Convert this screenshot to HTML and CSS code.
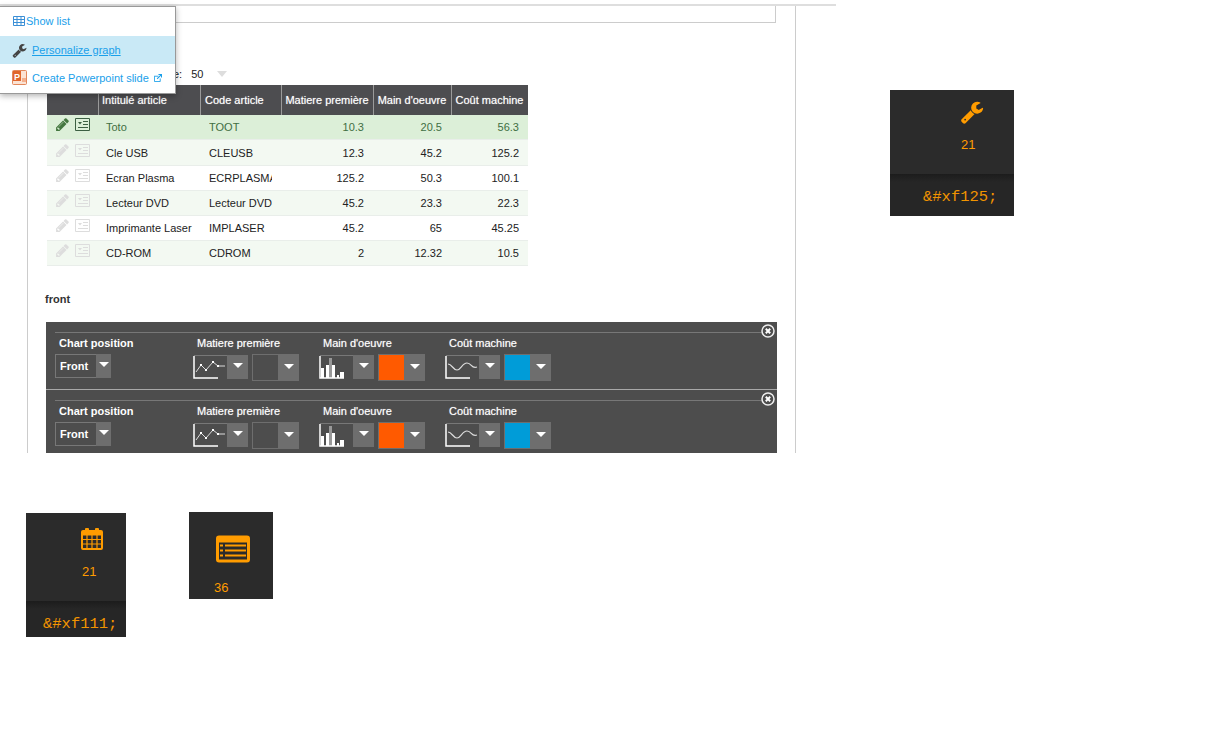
FILE: index.html
```html
<!DOCTYPE html>
<html lang="en">
<head>
    <meta charset="UTF-8">
    <title>Personalize graph</title>
    <link rel="stylesheet" href="styles.css">
</head>
<body>
    <svg class="defs" width="0" height="0">
        <symbol id="wrench" viewBox="0 0 1792 1792"><path d="M448 1472q0-26-19-45t-45-19-45 19-19 45 19 45 45 19 45-19 19-45zm644-420l-682 682q-37 37-90 37-52 0-91-37l-106-108q-38-36-38-90 0-53 38-91l681-681q39 98 114.5 173.5t173.5 114.5zm634-435q0 39-23 106-47 134-164.5 217.5t-258.5 83.5q-185 0-316.5-131.5t-131.5-316.5 131.5-316.5 316.5-131.5q58 0 121.5 16.5t107.5 46.5q16 11 16 28t-16 28l-293 169v224l193 107q5-3 79-48.5t135.5-81 70.5-35.5q15 0 23.5 10t8.5 25z"/></symbol>
        <symbol id="pencil" viewBox="0 0 1792 1792"><path d="M491 1536l91-91-235-235-91 91v107h128v128h107zm523-928q0-22-22-22-10 0-17 7l-542 542q-7 7-7 17 0 22 22 22 10 0 17-7l542-542q7-7 7-17zm-54-192l416 416-832 832h-416v-416zm683 96q0 53-37 90l-166 166-416-416 166-165q36-38 90-38 53 0 91 38l235 234q37 39 37 91z"/></symbol>
        <symbol id="card" viewBox="0 0 15 13"><path d="M.5.5h14v12H.5z" fill="none" stroke="currentColor"/><path d="M3 4h4L5 6.500zM8 3h5v1H8zM8 6h5v1H8zM3 9h10v1H3z" fill="currentColor"/></symbol>
        <symbol id="axis-line" viewBox="0 0 34 24"><path d="M1 .5h33" stroke="#777"/><path d="M1 1v22h24" fill="none" stroke="#fff" stroke-width="1.500"/><path d="M3 17l5-7 5 5 7-8 5 4h7" fill="none" stroke="#ddd"/><path d="M7 9h2v2H7zM12 14h2v2h-2zM19 6h2v2h-2zM24 10h2v2h-2z" fill="#fff"/></symbol>
        <symbol id="axis-bars" viewBox="0 0 34 24"><path d="M1 .5h33" stroke="#777"/><path d="M10 3h3v20h-3z" fill="#999"/><path d="M1 1v22h24" fill="none" stroke="#fff" stroke-width="1.500"/><path d="M2 13h3v10H2zM7 10h3v13H7zM13 10h3v13h-3zM18 20h2v3h-2zM21 17h4v6h-4z" fill="#fff"/></symbol>
        <symbol id="axis-wave" viewBox="0 0 34 24"><path d="M1 .5h33" stroke="#777"/><path d="M1 1v22h24" fill="none" stroke="#fff" stroke-width="1.500"/><path d="M3 9c4 0 5 6 9 6s5-7 10-7 4 6 10 4" fill="none" stroke="#ddd" stroke-width="1.200"/></symbol>
        <symbol id="close" viewBox="0 0 14 14"><circle cx="7" cy="7" r="6" fill="#4d4d4d" stroke="#eee" stroke-width="1.500"/><path d="M4.800 4.800l4.400 4.400M9.200 4.800l-4.400 4.400" stroke="#fff" stroke-width="2"/></symbol>
    </svg>

    <div id="topRow">
        <div id="mainArea">
            <div id="frame">
                <div id="titleBox"></div>
                <div id="pageSize"><span>e:</span><span class="sizeValue">50</span><span class="sizeArrow"></span></div>
                <table id="articles">
                    <thead>
                        <tr><th class="tools"></th><th>Intitulé article</th><th>Code article</th><th class="num">Matiere première</th><th class="num">Main d'oeuvre</th><th class="num">Coût machine</th></tr>
                    </thead>
                    <tbody>
                        <tr class="selected">
                            <td class="tools"><svg class="pen"><use href="#pencil"/></svg><svg class="cardIcon"><use href="#card"/></svg></td>
                            <td>Toto</td><td><div class="clip">TOOT</div></td><td class="num">10.3</td><td class="num">20.5</td><td class="num">56.3</td>
                        </tr>
                        <tr class="tint">
                            <td class="tools"><svg class="pen"><use href="#pencil"/></svg><svg class="cardIcon"><use href="#card"/></svg></td>
                            <td>Cle USB</td><td><div class="clip">CLEUSB</div></td><td class="num">12.3</td><td class="num">45.2</td><td class="num">125.2</td>
                        </tr>
                        <tr>
                            <td class="tools"><svg class="pen"><use href="#pencil"/></svg><svg class="cardIcon"><use href="#card"/></svg></td>
                            <td>Ecran Plasma</td><td><div class="clip">ECRPLASMA</div></td><td class="num">125.2</td><td class="num">50.3</td><td class="num">100.1</td>
                        </tr>
                        <tr class="tint">
                            <td class="tools"><svg class="pen"><use href="#pencil"/></svg><svg class="cardIcon"><use href="#card"/></svg></td>
                            <td>Lecteur DVD</td><td><div class="clip">Lecteur DVD</div></td><td class="num">45.2</td><td class="num">23.3</td><td class="num">22.3</td>
                        </tr>
                        <tr>
                            <td class="tools"><svg class="pen"><use href="#pencil"/></svg><svg class="cardIcon"><use href="#card"/></svg></td>
                            <td>Imprimante Laser</td><td><div class="clip">IMPLASER</div></td><td class="num">45.2</td><td class="num">65</td><td class="num">45.25</td>
                        </tr>
                        <tr class="tint">
                            <td class="tools"><svg class="pen"><use href="#pencil"/></svg><svg class="cardIcon"><use href="#card"/></svg></td>
                            <td>CD-ROM</td><td><div class="clip">CDROM</div></td><td class="num">2</td><td class="num">12.32</td><td class="num">10.5</td>
                        </tr>
                    </tbody>
                </table>
                <div id="frontLabel">front</div>
                <div id="chartPanel">
                    <div class="chartRow">
                        <div class="rule"></div>
                        <svg class="closeIcon"><use href="#close"/></svg>
                        <div class="groups">
                            <div class="group groupFirst">
                                <div class="groupLabel groupLabelBold">Chart position</div>
                                <div class="positionSelect"><span class="positionText">Front</span><span class="arrowBox arrowUp"><i></i></span></div>
                            </div>
                            <div class="group">
                                <div class="groupLabel">Matiere première</div>
                                <div class="controls">
                                    <div class="typeSelect"><svg class="axis"><use href="#axis-line"/></svg><span class="arrowBox"><i></i></span></div>
                                    <div class="colorSelect"><span class="swatch"></span><span class="arrowBox"><i></i></span></div>
                                </div>
                            </div>
                            <div class="group">
                                <div class="groupLabel">Main d'oeuvre</div>
                                <div class="controls">
                                    <div class="typeSelect"><svg class="axis"><use href="#axis-bars"/></svg><span class="arrowBox"><i></i></span></div>
                                    <div class="colorSelect"><span class="swatch orange"></span><span class="arrowBox"><i></i></span></div>
                                </div>
                            </div>
                            <div class="group">
                                <div class="groupLabel">Coût machine</div>
                                <div class="controls">
                                    <div class="typeSelect"><svg class="axis"><use href="#axis-wave"/></svg><span class="arrowBox"><i></i></span></div>
                                    <div class="colorSelect"><span class="swatch blue"></span><span class="arrowBox"><i></i></span></div>
                                </div>
                            </div>
                        </div>
                    </div>
                    <div class="chartRow">
                        <div class="rule"></div>
                        <svg class="closeIcon"><use href="#close"/></svg>
                        <div class="groups">
                            <div class="group groupFirst">
                                <div class="groupLabel groupLabelBold">Chart position</div>
                                <div class="positionSelect"><span class="positionText">Front</span><span class="arrowBox arrowUp"><i></i></span></div>
                            </div>
                            <div class="group">
                                <div class="groupLabel">Matiere première</div>
                                <div class="controls">
                                    <div class="typeSelect"><svg class="axis"><use href="#axis-line"/></svg><span class="arrowBox"><i></i></span></div>
                                    <div class="colorSelect"><span class="swatch"></span><span class="arrowBox"><i></i></span></div>
                                </div>
                            </div>
                            <div class="group">
                                <div class="groupLabel">Main d'oeuvre</div>
                                <div class="controls">
                                    <div class="typeSelect"><svg class="axis"><use href="#axis-bars"/></svg><span class="arrowBox"><i></i></span></div>
                                    <div class="colorSelect"><span class="swatch orange"></span><span class="arrowBox"><i></i></span></div>
                                </div>
                            </div>
                            <div class="group">
                                <div class="groupLabel">Coût machine</div>
                                <div class="controls">
                                    <div class="typeSelect"><svg class="axis"><use href="#axis-wave"/></svg><span class="arrowBox"><i></i></span></div>
                                    <div class="colorSelect"><span class="swatch blue"></span><span class="arrowBox"><i></i></span></div>
                                </div>
                            </div>
                        </div>
                    </div>
                </div>
            </div>

            <div id="menu">
                <a class="menuItem">
                    <svg class="menuTable" viewBox="0 0 12 10"><path d="M.5.500h11v9H.5zM.5 3.500h11M.5 6.500h11M4 .5v9M8 .5v9" fill="none" stroke="#3b8fd6"/></svg>
                    <span>Show list</span>
                </a>
                <a class="menuItem itemHover">
                    <svg class="menuWrench"><use href="#wrench"/></svg>
                    <span class="underlined">Personalize graph</span>
                </a>
                <a class="menuItem">
                    <svg class="menuPpt" viewBox="0 0 15 15"><rect x=".5" y=".5" width="14" height="14" rx="1" fill="#fbe3d4" stroke="#e2875a"/><rect x="1" y="1" width="8" height="10" fill="#e0652c"/><text x="2" y="9.500" class="pptLetter">P</text><path d="M10 8h4v4h-4z" fill="#f3b08e"/></svg>
                    <span>Create Powerpoint slide</span>
                    <svg class="menuExternal" viewBox="0 0 9 9"><path d="M1 2.500h4M.5 2v6.500H7V5" fill="none" stroke="#1aa0ea"/><path d="M3.500 5.500L8 1M5 .5h3.500V4" fill="none" stroke="#1aa0ea" stroke-width="1.200"/></svg>
                </a>
            </div>
        </div>

        <div class="tile tileWrench">
            <div class="tileTop">
                <svg class="tileIcon"><use href="#wrench"/></svg>
                <div class="tileNumber">21</div>
            </div>
            <div class="tileCode">&amp;#xf125;</div>
        </div>
    </div>

    <div id="bottomRow">
        <div class="tile tileCalendar">
            <div class="tileTop">
                <svg class="tileIcon" viewBox="0 0 22 22"><path d="M5 0h2a1 1 0 0 1 1 1v1h6V1a1 1 0 0 1 1-1h2a1 1 0 0 1 1 1v1h2a2 2 0 0 1 2 2v16a2 2 0 0 1-2 2H2a2 2 0 0 1-2-2V4a2 2 0 0 1 2-2h2V1a1 1 0 0 1 1-1z"/><path d="M2 7h18v13H2z" fill="#2b2b2b"/><path d="M2 7h18M2 11.500h18M2 16h18M6 7v13M11 7v13M16 7v13" stroke="#ff9c00" stroke-width="1.200" fill="none"/></svg>
                <div class="tileNumber">21</div>
            </div>
            <div class="tileCode">&amp;#xf111;</div>
        </div>
        <div class="tile tileList">
            <div class="tileTop">
                <svg class="tileIcon" viewBox="0 0 34 27"><rect width="34" height="27" rx="3"/><rect x="3" y="7" width="28" height="17" fill="#2b2b2b"/><path d="M4 9h3v2H4zM9 9h21v2H9zM4 14h3v2H4zM9 14h21v2H9zM4 19h3v2H4zM9 19h21v2H9z"/></svg>
                <div class="tileNumber">36</div>
            </div>
        </div>
    </div>
</body>
</html>
```

FILE: styles.css
```css
body{
    margin: 0;
    font-family: "Liberation Sans", Arial, sans-serif;
    font-size: 11px;
    color: #222;
    background-color: white;
}
.defs{
    display: block;
    height: 0;
}
#topRow{
    display: flex;
    align-items: flex-start;
}
#mainArea{
    position: relative;
    width: 836px;
    padding-top: 6px;
    background: linear-gradient(#dedede, #dedede) 0 4px / 100% 2px no-repeat;
}
#frame{
    box-sizing: border-box;
    width: 769px;
    height: 447px;
    margin-left: 27px;
    border-left: 1px solid #ccc;
    border-right: 1px solid #ccc;
}
#titleBox{
    box-sizing: border-box;
    width: 748px;
    height: 17px;
    border-right: 1px solid #ccc;
    border-bottom: 1px solid #ccc;
}
#pageSize{
    display: flex;
    align-items: center;
    height: 14px;
    margin: 44px 0 4px 145px;
}
.sizeValue{
    margin-left: 9px;
}
.sizeArrow{
    width: 0;
    height: 0;
    margin-left: 14px;
    border-left: 5px solid transparent;
    border-right: 5px solid transparent;
    border-top: 6px solid #ddd;
}

#articles{
    table-layout: fixed;
    border-collapse: separate;
    border-spacing: 0;
    width: 481px;
    margin-left: 19px;
}
#articles th{
    box-sizing: border-box;
    height: 30px;
    padding: 0 0 0 4px;
    background-color: #4d4d50;
    box-shadow: inset 1px 0 0 #9a9a9a;
    color: white;
    font-weight: normal;
    font-size: 11px;
    text-shadow: 0 0 1px rgba(255,255,255,0.6);
    text-align: left;
    white-space: nowrap;
}
#articles th.tools{
    width: 51px;
    box-shadow: none;
}
#articles th:nth-child(2){ width: 102px; }
#articles th:nth-child(3){ width: 81px; padding-left: 5px; }
#articles th:nth-child(4){ width: 92px; }
#articles th:nth-child(5){ width: 78px; }
#articles th.num{
    text-align: center;
    padding: 0;
}
#articles td{
    box-sizing: border-box;
    height: 25px;
    padding: 0 9px;
    border-bottom: 1px solid #e9eeea;
    white-space: nowrap;
    overflow: hidden;
}
#articles .selected + tr td{
    height: 26px;
}
#articles td:nth-child(2){
    padding-left: 8px;
}
#articles td.tools{
    padding: 0 0 5px 8px;
}
#articles td.num{
    text-align: right;
}
.clip{
    overflow: hidden;
}
.pen{
    width: 15px;
    height: 15px;
    fill: #ddd;
    vertical-align: middle;
}
.cardIcon{
    width: 15px;
    height: 13px;
    margin-left: 5px;
    color: #ddd;
    vertical-align: middle;
}
.tint td{
    background-color: #f3f9f2;
}
.selected td{
    background-color: #dcefd8;
    color: #3f6e43;
    border-bottom: 0;
}
.selected .pen{
    fill: #44773f;
}
.selected .cardIcon{
    color: #3c5f42;
}

#frontLabel{
    height: 14px;
    line-height: 14px;
    margin: 26px 0 16px 17px;
    font-weight: bold;
    color: #333;
}
#chartPanel{
    width: 731px;
    height: 131px;
    margin-left: 18px;
    background-color: #4d4d4d;
    overflow: hidden;
}
.chartRow{
    position: relative;
    box-sizing: border-box;
    height: 68px;
    padding-top: 10px;
    border-bottom: 1px solid #a8a8a8;
}
.rule{
    height: 1px;
    margin: 0 15px 3px 9px;
    background-color: #777;
}
.closeIcon{
    position: absolute;
    top: 2px;
    right: 2px;
    width: 14px;
    height: 14px;
}
.groups{
    display: flex;
    padding-left: 9px;
}
.group{
    width: 126px;
}
.groupFirst{
    width: 138px;
}
.groupLabel{
    height: 14px;
    line-height: 14px;
    padding-left: 4px;
    margin-bottom: 4px;
    color: white;
    text-shadow: 0 0 1px rgba(255,255,255,0.6);
}
.groupLabelBold{
    font-weight: bold;
    text-shadow: none;
}
.controls{
    display: flex;
    align-items: flex-start;
    gap: 4px;
}
.positionSelect{
    box-sizing: border-box;
    display: flex;
    width: 56px;
    height: 24px;
    border: 1px solid #777;
}
.positionText{
    flex: 1;
    line-height: 22px;
    padding-left: 4px;
    color: white;
    font-weight: bold;
}
.arrowBox{
    box-sizing: border-box;
    display: flex;
    align-items: center;
    justify-content: center;
    width: 21px;
    padding-bottom: 3px;
    background-color: #6e6e6e;
}
.arrowBox i{
    width: 0;
    height: 0;
    border-left: 5px solid transparent;
    border-right: 5px solid transparent;
    border-top: 5px solid white;
}
.arrowUp{
    width: 15px;
    margin: -1px -1px -1px 0;
    padding-bottom: 4px;
}
.typeSelect{
    display: flex;
    width: 55px;
    height: 24px;
    margin-top: 1px;
}
.axis{
    width: 34px;
    height: 24px;
}
.colorSelect{
    box-sizing: border-box;
    display: flex;
    width: 47px;
    height: 27px;
    padding: 1px 0 1px 1px;
    background-color: #6e6e6e;
}
.swatch{
    width: 25px;
    background-color: #4d4d4d;
}
.orange{
    background-color: #ff5a00;
}
.blue{
    background-color: #009cd8;
}

#menu{
    position: absolute;
    top: 6px;
    left: 0;
    box-sizing: border-box;
    width: 176px;
    height: 88px;
    background-color: white;
    border: 1px solid #999;
    border-left: 0;
    box-shadow: 0 2px 6px rgba(0,0,0,0.3);
    color: #1aa0ea;
}
.menuItem{
    box-sizing: border-box;
    display: flex;
    align-items: center;
    height: 29px;
    padding: 0 0 2px 12px;
}
.itemHover{
    height: 28px;
    padding-bottom: 0;
    background-color: #c9e9f6;
}
.underlined{
    text-decoration: underline;
}
.menuTable{
    width: 12px;
    height: 10px;
    margin: 0 1px 0 1px;
}
.menuWrench{
    width: 15px;
    height: 15px;
    margin-right: 5px;
    fill: #444;
}
.menuPpt{
    width: 15px;
    height: 15px;
    margin-right: 5px;
}
.pptLetter{
    font-family: "Liberation Sans", Arial, sans-serif;
    font-size: 9px;
    font-weight: bold;
    fill: white;
}
.menuExternal{
    width: 8px;
    height: 8px;
    margin-left: 5px;
}

.tile{
    background-color: #2b2b2b;
    color: #ff9c00;
    flex-shrink: 0;
}
.tileTop{
    box-sizing: border-box;
}
.tileNumber{
    font-size: 13px;
    line-height: 14px;
}
.tileIcon{
    display: block;
    fill: #ff9c00;
}
.tileCode{
    box-sizing: border-box;
    font-family: "Liberation Mono", "Courier New", monospace;
    font-size: 15.5px;
    line-height: 18px;
    color: #f29400;
    background: linear-gradient(#1c1c1c, #262626 8px);
}
.tileWrench{
    width: 124px;
    margin: 90px 0 0 54px;
}
.tileWrench .tileTop{
    height: 84px;
    padding: 10px 0 0 71px;
}
.tileWrench .tileIcon{
    width: 24px;
    height: 24px;
    margin: 0 0 14px -1px;
}
.tileWrench .tileCode{
    height: 42px;
    padding: 14px 0 0 33px;
}
#bottomRow{
    display: flex;
    align-items: flex-start;
    gap: 63px;
    margin-top: 59px;
    padding-left: 26px;
}
.tileCalendar{
    width: 100px;
    margin-top: 1px;
}
.tileCalendar .tileTop{
    height: 88px;
    padding: 15px 0 0 56px;
}
.tileCalendar .tileIcon{
    width: 22px;
    height: 22px;
    margin: 0 0 15px -1px;
}
.tileCalendar .tileCode{
    height: 36px;
    padding: 14px 0 0 17px;
}
.tileList{
    width: 84px;
    height: 87px;
}
.tileList .tileTop{
    padding: 23px 0 0 27px;
}
.tileList .tileIcon{
    width: 34px;
    height: 28px;
    margin-bottom: 18px;
}
.tileList .tileNumber{
    margin-left: -2px;
}
```
